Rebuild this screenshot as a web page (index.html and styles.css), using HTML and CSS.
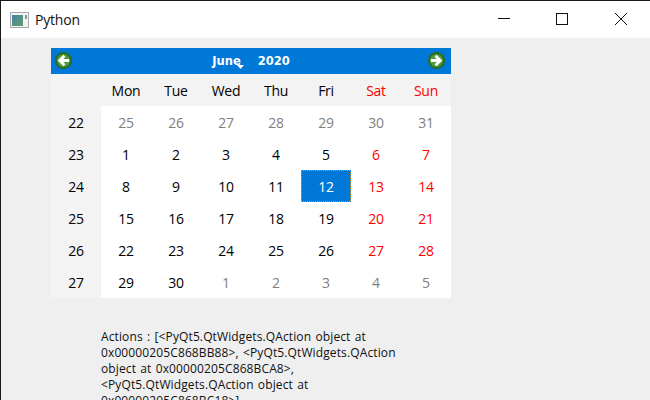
FILE: index.html
```html
<!DOCTYPE html>
<html lang="en">
<head>
<meta charset="utf-8">
<title>Python</title>
<link rel="stylesheet" href="styles.css">
</head>
<body>
<div class="window">
  <header class="titlebar">
    <svg class="appicon" width="20" height="16" viewBox="0 0 20 16">
      <defs><linearGradient id="g" x1="0" y1="0" x2="1" y2="1"><stop offset="0" stop-color="#4a7fa8"/><stop offset="1" stop-color="#5fa06a"/></linearGradient></defs>
      <rect x="0.5" y="0.5" width="18" height="15" fill="#f4f4f4" stroke="#a9a9a9"/>
      <rect x="2" y="3" width="11" height="11" fill="url(#g)"/>
      <rect x="15" y="3" width="2" height="4" fill="#6fa0a0"/>
    </svg>
    <span class="title">Python</span>
    <div class="controls">
      <svg class="ctl" width="59" height="37" viewBox="0 0 59 37"><path d="M25 17.5H37" stroke="#111" fill="none"/></svg>
      <svg class="ctl" width="59" height="37" viewBox="0 0 59 37"><rect x="24.5" y="12.5" width="11" height="11" stroke="#111" fill="none"/></svg>
      <svg class="ctl" width="59" height="37" viewBox="0 0 59 37"><path d="M24 12L36 24M36 12L24 24" stroke="#111" fill="none"/></svg>
    </div>
  </header>
  <main class="content">
    <section class="calendar">
      <div class="nav">
        <svg class="arrow" width="17" height="17" viewBox="0 0 18 18">
          <circle cx="9" cy="9" r="9" fill="#2a6a1e"/><circle cx="9" cy="9" r="7" fill="#4c9a3a"/>
          <path d="M15 9H6M10 4L5 9l5 5" stroke="#fff" stroke-width="3" fill="none"/>
        </svg>
        <div class="month-year">
          <span class="month">June<svg class="caret" width="7" height="4" viewBox="0 0 7 4"><path d="M0 0H7L3.500 4Z" fill="#fff"/></svg></span>
          <span class="year">2020</span>
        </div>
        <svg class="arrow" width="17" height="17" viewBox="0 0 18 18">
          <circle cx="9" cy="9" r="9" fill="#2a6a1e"/><circle cx="9" cy="9" r="7" fill="#4c9a3a"/>
          <path d="M3 9H12M8 4l5 5-5 5" stroke="#fff" stroke-width="3" fill="none"/>
        </svg>
      </div>
      <div class="grid">
        <div class="head"></div><div class="head">Mon</div><div class="head">Tue</div><div class="head">Wed</div><div class="head">Thu</div><div class="head">Fri</div><div class="head red">Sat</div><div class="head red">Sun</div>

        <div class="week">22</div><div class="day dim">25</div><div class="day dim">26</div><div class="day dim">27</div><div class="day dim">28</div><div class="day dim">29</div><div class="day dim">30</div><div class="day dim">31</div>

        <div class="week">23</div><div class="day">1</div><div class="day">2</div><div class="day">3</div><div class="day">4</div><div class="day">5</div><div class="day red">6</div><div class="day red">7</div>

        <div class="week">24</div><div class="day">8</div><div class="day">9</div><div class="day">10</div><div class="day">11</div><div class="day selected">12</div><div class="day red">13</div><div class="day red">14</div>

        <div class="week">25</div><div class="day">15</div><div class="day">16</div><div class="day">17</div><div class="day">18</div><div class="day">19</div><div class="day red">20</div><div class="day red">21</div>

        <div class="week">26</div><div class="day">22</div><div class="day">23</div><div class="day">24</div><div class="day">25</div><div class="day">26</div><div class="day red">27</div><div class="day red">28</div>

        <div class="week">27</div><div class="day">29</div><div class="day">30</div><div class="day dim">1</div><div class="day dim">2</div><div class="day dim">3</div><div class="day dim">4</div><div class="day dim">5</div>
      </div>
    </section>
    <p class="actions">Actions : [&lt;PyQt5.QtWidgets.QAction object at<br>0x00000205C868BB88&gt;, &lt;PyQt5.QtWidgets.QAction<br>object at 0x00000205C868BCA8&gt;,<br>&lt;PyQt5.QtWidgets.QAction object at<br>0x00000205C868BC18&gt;]</p>
  </main>
</div>
</body>
</html>
```
FILE: styles.css
```css
* { box-sizing: border-box; }
html, body { margin: 0; height: 100%; overflow: hidden; }
body { font-family: "Open Sans", "Noto Sans", sans-serif; background: #f0f0f0; color: #000; }
.window { width: 650px; height: 400px; border-top: 1px solid #1a1a1a; border-left: 1px solid #1a1a1a; overflow: hidden; display: flex; flex-direction: column; background: #efefef; }
.titlebar { height: 37px; flex: none; background: #fff; display: flex; align-items: center; padding-left: 9px; }
.appicon { margin-right: 5px; }
.title { font-size: 14px; letter-spacing: -0.2px; color: #111; }
.controls { margin-left: auto; display: flex; }
.ctl { display: block; }
.content { flex: 1; padding: 10px 0 0 50px; }
.calendar { width: 400px; }
.nav { height: 26px; background: #0078d7; display: flex; align-items: center; justify-content: space-between; padding: 0 6px 1px 4px; }
.month-year { display: flex; gap: 17px; font-family: "DejaVu Sans", sans-serif; font-weight: 700; font-size: 11.500px; color: #fff; margin-right: -2px; margin-top: 1px; }
.month { position: relative; }
.caret { position: absolute; right: -3px; bottom: -1px; }
.grid { display: grid; grid-template-columns: repeat(8, 50px); grid-template-rows: repeat(7, 32px); font-size: 14px; letter-spacing: -0.25px; background: #fff; }
.grid > div { display: flex; align-items: center; justify-content: center; }
.head, .week { background: #f3f3f3; }
.dim { color: #7f7f7f; }
.red { color: #ff0000; }
.selected {
  color: #fff;
  background-color: #0078d7;
  background-image:
    repeating-linear-gradient(90deg, #ff8c00 0 1px, #0078d7 1px 2px),
    repeating-linear-gradient(90deg, #ff8c00 0 1px, #0078d7 1px 2px),
    repeating-linear-gradient(180deg, #ff8c00 0 1px, #0078d7 1px 2px),
    repeating-linear-gradient(180deg, #ff8c00 0 1px, #0078d7 1px 2px);
  background-size: 100% 1px, 100% 1px, 1px 100%, 1px 100%;
  background-position: top, bottom, left, right;
  background-repeat: no-repeat;
}
.actions { margin: 31px 0 0 50px; font-size: 12px; line-height: 16px; letter-spacing: 0.12px; word-spacing: 1px; white-space: nowrap; color: #111; }
```
